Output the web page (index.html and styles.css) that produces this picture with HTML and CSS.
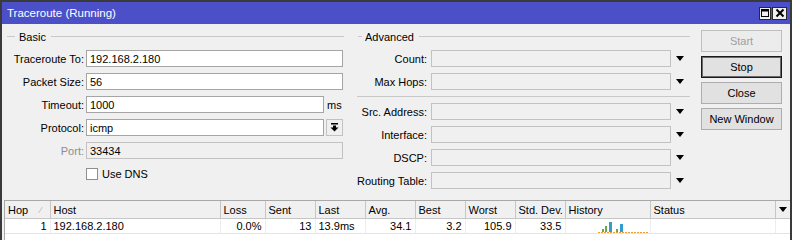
FILE: index.html
```html
<!DOCTYPE html>
<html lang="en">
<head>
    <meta charset="UTF-8">
    <title>Traceroute (Running)</title>
    <link rel="stylesheet" href="styles.css">
</head>
<body>
    <div class="window">
        <div class="titlebar">
            <span class="title">Traceroute (Running)</span>
            <span class="wbtn">
                <svg width="10" height="10" viewBox="0 0 10 10"><rect x="1.5" y="1.5" width="7" height="7" fill="none" stroke="#000"/><line x1="1" y1="2.5" x2="9" y2="2.5" stroke="#000" stroke-width="2"/></svg>
            </span>
            <span class="wbtn close">
                <svg width="10" height="10" viewBox="0 0 10 10"><path d="M1.5 1.5 L8.5 8.5 M8.5 1.5 L1.5 8.5" stroke="#000" stroke-width="2"/></svg>
            </span>
        </div>

        <div class="content">
            <div class="form-area">
                <!-- basic -->
                <div class="group basic">
                    <div class="group-title"><span class="dash"></span><span>Basic</span><span class="line"></span></div>
                    <div class="row"><label>Traceroute To:</label><input class="field" type="text" value="192.168.2.180"></div>
                    <div class="row"><label>Packet Size:</label><input class="field" type="text" value="56"></div>
                    <div class="row"><label>Timeout:</label><input class="field short" type="text" value="1000"><span class="unit">ms</span></div>
                    <div class="row">
                        <label>Protocol:</label><input class="field short" type="text" value="icmp">
                        <span class="pick">
                            <svg width="9" height="9" viewBox="0 0 9 9"><rect x="1" y="0" width="7" height="1.5" fill="#000"/><rect x="3" y="2.5" width="3" height="2.5" fill="#000"/><path d="M0.5 4.5 L8.5 4.5 L4.5 8.5 Z" fill="#000"/></svg>
                        </span>
                    </div>
                    <div class="row"><label class="off">Port:</label><input class="field off" type="text" value="33434" readonly></div>
                    <div class="row check-row"><span class="checkbox"></span><span>Use DNS</span></div>
                </div>

                <!-- advanced -->
                <div class="group advanced">
                    <div class="group-title"><span class="dash"></span><span>Advanced</span><span class="line"></span></div>
                    <div class="row"><label>Count:</label><input class="field off" type="text" readonly><span class="drop"></span></div>
                    <div class="row"><label>Max Hops:</label><input class="field off" type="text" readonly><span class="drop"></span></div>
                    <div class="sep"></div>
                    <div class="row"><label>Src. Address:</label><input class="field off" type="text" readonly><span class="drop"></span></div>
                    <div class="row"><label>Interface:</label><input class="field off" type="text" readonly><span class="drop"></span></div>
                    <div class="row"><label>DSCP:</label><input class="field off" type="text" readonly><span class="drop"></span></div>
                    <div class="row"><label>Routing Table:</label><input class="field off" type="text" readonly><span class="drop"></span></div>
                </div>

                <div class="buttons">
                    <button class="btn" disabled>Start</button>
                    <button class="btn focus">Stop</button>
                    <button class="btn">Close</button>
                    <button class="btn">New Window</button>
                </div>
            </div>

            <div class="list">
                <table>
                    <colgroup>
                        <col style="width:45px"><col style="width:170px"><col style="width:45px"><col style="width:50px">
                        <col style="width:50px"><col style="width:50px"><col style="width:50px"><col style="width:50px">
                        <col style="width:50px"><col style="width:85px"><col style="width:125px"><col style="width:16px">
                    </colgroup>
                    <thead>
                        <tr>
                            <th><span class="hop">Hop<span class="sort">&#8260;</span></span></th>
                            <th>Host</th>
                            <th>Loss</th>
                            <th>Sent</th>
                            <th>Last</th>
                            <th>Avg.</th>
                            <th>Best</th>
                            <th>Worst</th>
                            <th>Std. Dev.</th>
                            <th>History</th>
                            <th>Status</th>
                            <th class="menu"><span class="drop"></span></th>
                        </tr>
                    </thead>
                    <tbody>
                        <tr>
                            <td class="num">1</td>
                            <td>192.168.2.180</td>
                            <td class="num">0.0%</td>
                            <td class="num">13</td>
                            <td>13.9ms</td>
                            <td class="num">34.1</td>
                            <td class="num">3.2</td>
                            <td class="num">105.9</td>
                            <td class="num">33.5</td>
                            <td class="history">
                                <svg width="60" height="13" viewBox="0 0 60 13">
                                    <rect x="4" y="9" width="2" height="3" fill="#6aa84f"/>
                                    <rect x="7" y="6" width="2" height="6" fill="#6aa84f"/>
                                    <rect x="11" y="2" width="3" height="10" fill="#2f9fd0"/>
                                    <rect x="18" y="9" width="2" height="3" fill="#6aa84f"/>
                                    <rect x="22" y="4" width="3" height="8" fill="#2f9fd0"/>
                                    <line x1="0" y1="12.5" x2="50" y2="12.5" stroke="#f0a030" stroke-width="1" stroke-dasharray="2 1"/>
                                </svg>
                            </td>
                            <td></td>
                            <td></td>
                        </tr>
                    </tbody>
                </table>
            </div>
        </div>
    </div>
</body>
</html>
```

FILE: styles.css
```css
body {
    margin: 0;
    background-color: #fff;
    font-family: "Liberation Sans", Arial, sans-serif;
    font-size: 11px;
    color: #000;
}

.window {
    width: 792px;
    height: 240px;
    box-sizing: border-box;
    border: 2px solid #3a3a3a;
    border-bottom: none;
    background-color: #f0f0f0;
    display: flex;
    flex-direction: column;
    overflow: hidden;
}

.titlebar {
    height: 22px;
    flex: none;
    background-color: #4b50c9;
    color: #fff;
    display: flex;
    align-items: center;
    padding: 0 3px 0 5px;
    font-size: 11.5px;
}

.title {
    flex: 1;
}

.wbtn {
    width: 12px;
    height: 13px;
    box-sizing: border-box;
    border: 1px solid #2a2a2a;
    background-color: #f0f0f0;
    margin-left: 1px;
    display: flex;
    align-items: center;
    justify-content: center;
}

.wbtn.close {
    width: 15px;
}

.content {
    flex: 1;
    display: flex;
    flex-direction: column;
}

.form-area {
    display: flex;
    padding: 6px 0 0 4px;
}

.group-title {
    display: flex;
    align-items: center;
    height: 13px;
    margin-bottom: 7px;
}

.group-title .dash {
    width: 8px;
    height: 1px;
    margin: 0 4px 0 1px;
    background-color: #c8c8c8;
}

.group-title .line {
    flex: 1;
    height: 1px;
    margin-left: 5px;
    background-color: #c8c8c8;
}

.basic {
    width: 338px;
}

.advanced {
    width: 333px;
    margin-left: 13px;
}

.advanced .group-title .dash {
    width: 4px;
    margin: 0 3px 0 1px;
}

.row {
    display: flex;
    align-items: center;
    height: 17px;
    margin-bottom: 6px;
}

.row label {
    width: 78px;
    margin-right: 2px;
    text-align: right;
    white-space: nowrap;
}

.advanced .row label {
    width: 70px;
    margin-right: 4px;
}

label.off {
    color: #8d8d8d;
}

.field {
    width: 257px;
    height: 17px;
    box-sizing: border-box;
    margin: 0;
    padding: 0 3px;
    border: 1px solid #a5a5a5;
    background-color: #fff;
    font-family: inherit;
    font-size: 11px;
    color: #000;
    outline: none;
}

.field.short {
    width: 238px;
}

.field.off {
    background-color: #f0f0f0;
    border-color: #c2c2c2;
}

.advanced .field {
    width: 240px;
}

.unit {
    margin-left: 3px;
}

.pick {
    width: 17px;
    height: 17px;
    box-sizing: border-box;
    margin-left: 2px;
    border: 1px solid #c2c2c2;
    background-color: #f0f0f0;
    display: flex;
    align-items: center;
    justify-content: center;
}

.check-row {
    padding-left: 80px;
}

.checkbox {
    width: 12px;
    height: 12px;
    box-sizing: border-box;
    border: 1px solid #8f8f8f;
    background-color: #fff;
    margin-right: 4px;
}

.drop {
    width: 0;
    height: 0;
    margin-left: 5px;
    border-left: 4.5px solid transparent;
    border-right: 4.5px solid transparent;
    border-top: 5px solid #000;
}

.sep {
    height: 1px;
    margin: 1px 0 6px 0;
    background-color: #c8c8c8;
}

.buttons {
    display: flex;
    flex-direction: column;
    width: 81px;
    margin-left: 11px;
}

.btn {
    height: 22px;
    margin: 0 0 4px 0;
    padding: 0;
    box-sizing: border-box;
    border: 1px solid #adadad;
    background-color: #e1e1e1;
    font-family: inherit;
    font-size: 11px;
    color: #000;
}

.btn:disabled {
    color: #a0a0a0;
    border-color: #bfbfbf;
    background-color: #ececec;
}

.btn.focus {
    border: 1px solid #1a1a1a;
    box-shadow: inset 0 0 0 1px #6a6a6a;
}

.list {
    flex: 1;
    margin: 5px 0 0 2px;
    border-top: 1px solid #a8a8a8;
    border-left: 1px solid #a8a8a8;
    background-color: #fff;
}

table {
    border-collapse: collapse;
    table-layout: fixed;
    width: 785px;
}

th {
    height: 17px;
    padding: 0 3px;
    text-align: left;
    font-weight: normal;
    background-color: #f0f0f0;
    border-right: 1px solid #c6c6c6;
    border-bottom: 1px solid #c6c6c6;
    white-space: nowrap;
    overflow: hidden;
}

th.menu {
    border-right: none;
    padding: 0 0 0 2px;
}

th .drop {
    display: block;
    margin-left: 1px;
}

.hop {
    display: flex;
    align-items: center;
}

.sort {
    margin-left: auto;
    margin-right: 5px;
    color: #b0b0b0;
    font-size: 9px;
}

td {
    height: 14px;
    padding: 0 3px;
    border-right: 1px solid #ededed;
    border-bottom: 1px solid #e4e4e4;
    white-space: nowrap;
}

td.num {
    text-align: right;
}

td.history {
    padding: 0 0 0 32px;
    vertical-align: bottom;
    line-height: 0;
}
```
